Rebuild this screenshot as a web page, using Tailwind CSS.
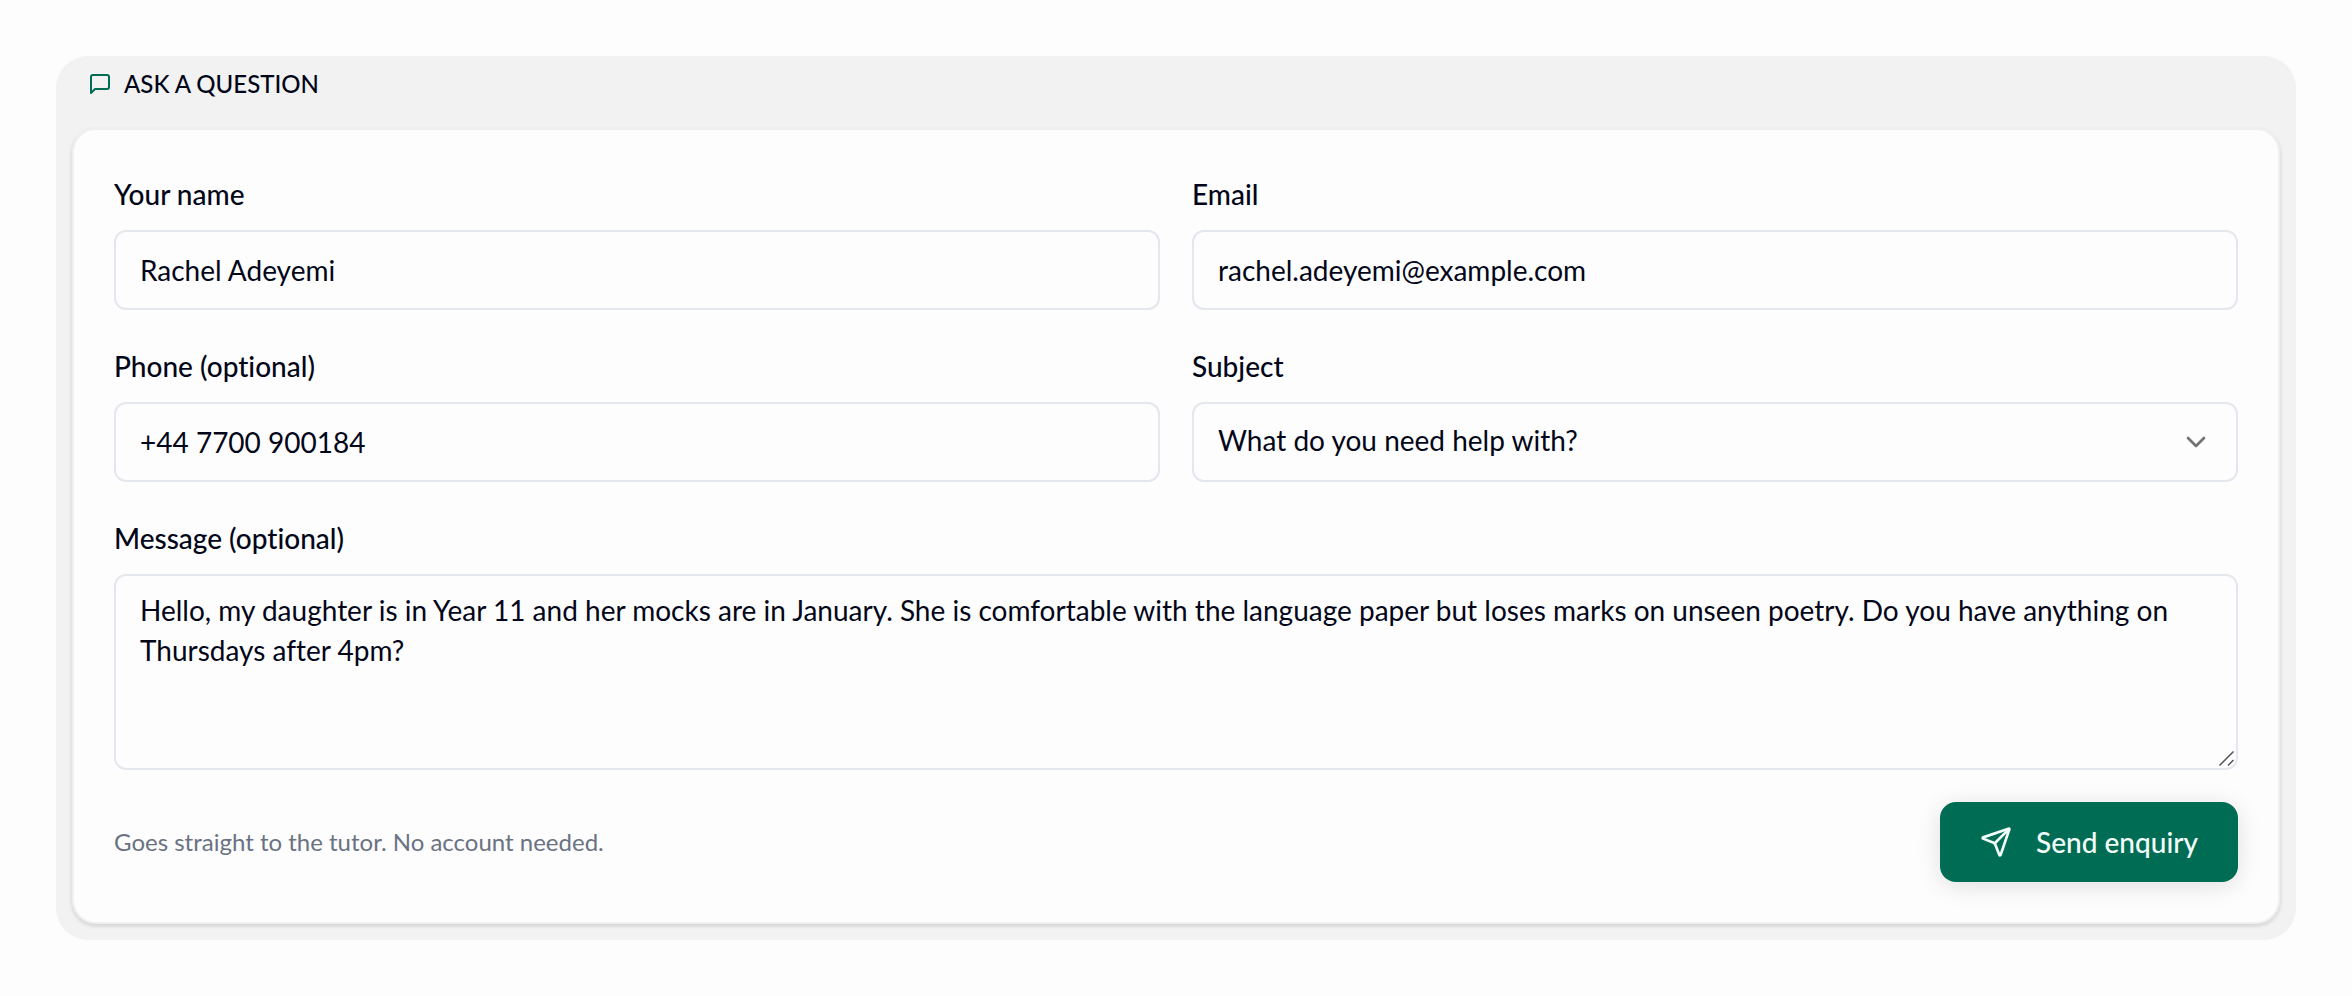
<!DOCTYPE html>
<html lang="en">
<head>
  <meta charset="utf-8">
  <meta name="viewport" content="width=device-width, initial-scale=1">
  <title>Ask a question</title>
  <script src="https://cdn.jsdelivr.net/npm/@tailwindcss/browser@4"></script>
</head>
<body class="bg-[#fdfdfd] p-14 font-['Lato','Liberation_Sans',sans-serif] text-[28px] leading-10 text-[#020618] [font-variant-ligatures:none]">
  <section class="rounded-[32px] bg-[#f2f2f2] px-4 pb-4">
    <h2 class="mb-4 flex h-14 items-center gap-3 px-4 text-2xl font-medium uppercase">
      <svg class="size-6 shrink-0 text-[#006c53]" viewBox="0 0 24 24" fill="none" stroke="currentColor" stroke-width="2" stroke-linecap="round" stroke-linejoin="round" aria-hidden="true">
        <path d="M21 15a2 2 0 0 1-2 2H7l-4 4V5a2 2 0 0 1 2-2h14a2 2 0 0 1 2 2z" />
      </svg>
      Ask a question
    </h2>

    <form class="grid grid-cols-1 gap-8 rounded-3xl border-2 border-[#f0f0f0] bg-[#fdfdfd] p-10 shadow-[0_2px_4px_rgb(0_0_0/0.14)] md:grid-cols-2">
      <div class="flex flex-col gap-3">
        <label for="name" class="leading-[48px] font-medium">Your name</label>
        <input id="name" type="text" value="Rachel Adeyemi" class="h-20 w-full rounded-xl border-2 border-[#e5e7ee] px-6 [font-variant-ligatures:none] outline-none">
      </div>
      <div class="flex flex-col gap-3">
        <label for="email" class="leading-[48px] font-medium">Email</label>
        <input id="email" type="email" value="rachel.adeyemi@example.com" class="h-20 w-full rounded-xl border-2 border-[#e5e7ee] px-6 [font-variant-ligatures:none] outline-none">
      </div>
      <div class="flex flex-col gap-3">
        <label for="phone" class="leading-[48px] font-medium">Phone (optional)</label>
        <input id="phone" type="tel" value="+44 7700 900184" class="h-20 w-full rounded-xl border-2 border-[#e5e7ee] px-6 [font-variant-ligatures:none] outline-none">
      </div>
      <div class="flex flex-col gap-3">
        <label for="subject" class="leading-[48px] font-medium">Subject</label>
        <div class="relative">
          <select id="subject" class="h-20 w-full appearance-none rounded-xl border-2 border-[#e5e7ee] px-6 pb-1 outline-none">
            <option>What do you need help with?</option>
          </select>
          <svg class="pointer-events-none absolute top-6 right-[26px] size-8 text-[#737376]" viewBox="0 0 24 24" fill="none" stroke="currentColor" stroke-width="2" stroke-linecap="round" stroke-linejoin="round" aria-hidden="true">
            <path d="m6 9 6 6 6-6" />
          </svg>
        </div>
      </div>
      <div class="flex flex-col gap-3 md:col-span-2">
        <label for="message" class="leading-[48px] font-medium">Message (optional)</label>
        <div class="relative">
          <textarea id="message" class="block h-[196px] w-full resize-none rounded-xl border-2 border-[#e5e7ee] px-6 py-[14px] [font-variant-ligatures:none] outline-none">Hello, my daughter is in Year 11 and her mocks are in January. She is comfortable with the language paper but loses marks on unseen poetry. Do you have anything on Thursdays after 4pm?</textarea>
          <svg class="pointer-events-none absolute right-1 bottom-1 size-4 text-[#555555]" viewBox="0 0 16 16" fill="none" stroke="currentColor" stroke-width="1.5" aria-hidden="true">
            <path d="M1.5 15.5 15.5 1.5M10 15.5l5.5-5.5" />
          </svg>
        </div>
      </div>
      <div class="flex items-center justify-between gap-8 md:col-span-2">
        <p class="text-2xl text-[#6a7282]">Goes straight to the tutor. No account needed.</p>
        <button type="submit" class="flex h-20 shrink-0 items-center gap-6 rounded-2xl bg-[#006c53] px-10 font-medium text-[#f4fffb] shadow-[0_4px_24px_rgb(0_0_0/0.12)]">
          <svg class="size-8" viewBox="0 0 24 24" fill="none" stroke="currentColor" stroke-width="2" stroke-linecap="round" stroke-linejoin="round" aria-hidden="true">
            <path d="M14.536 21.686a.5.5 0 0 0 .937-.024l6.5-19a.496.496 0 0 0-.635-.635l-19 6.5a.5.5 0 0 0-.024.937l7.93 3.18a2 2 0 0 1 1.112 1.11z" />
            <path d="m21.854 2.147-10.94 10.939" />
          </svg>
          Send enquiry
        </button>
      </div>
    </form>
  </section>
</body>
</html>
